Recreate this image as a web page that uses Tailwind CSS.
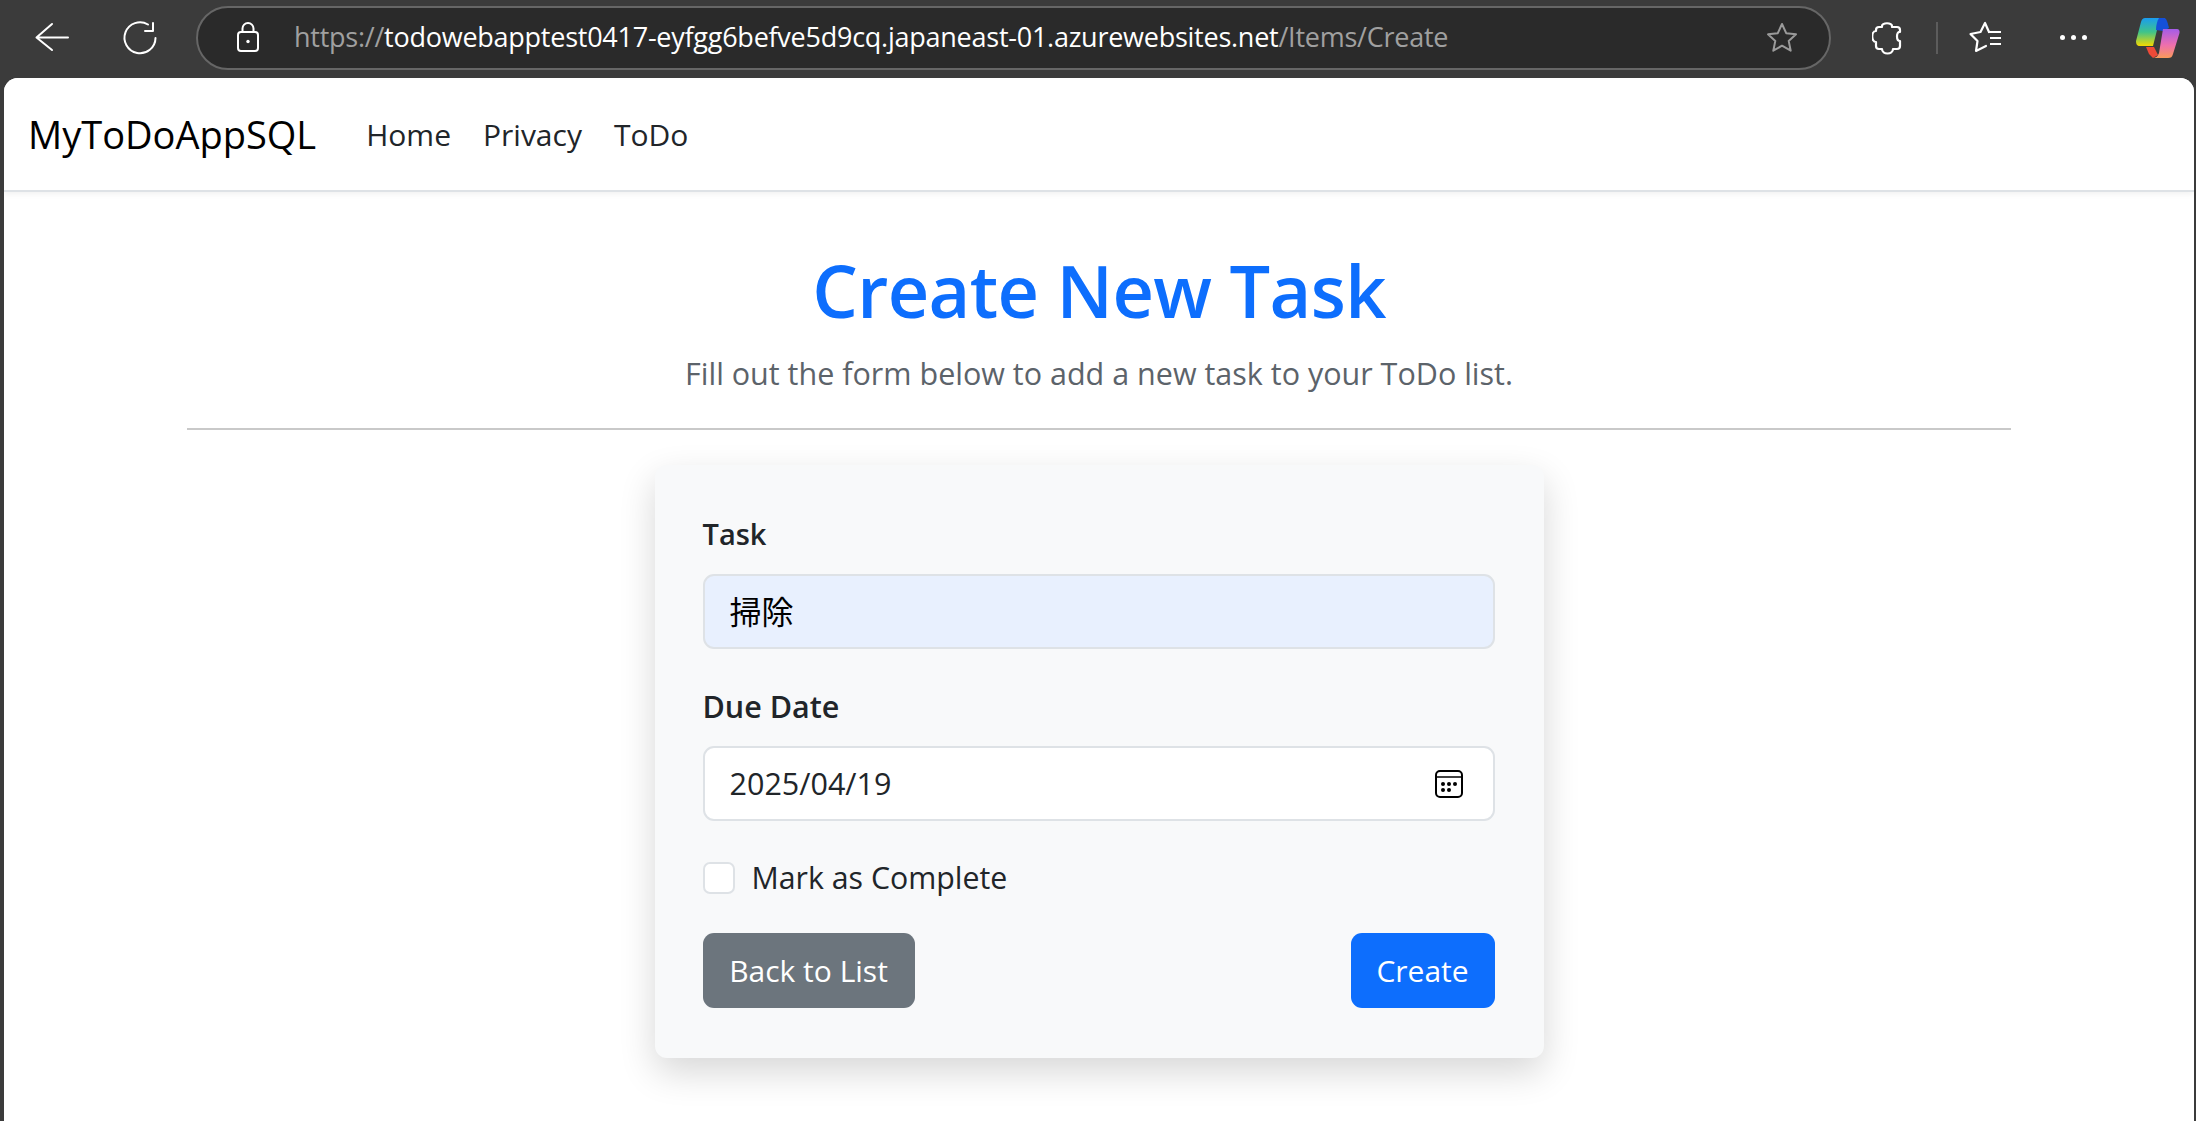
<!DOCTYPE html>
<html lang="en">
<head>
    <meta charset="UTF-8">
    <meta name="viewport" content="width=device-width, initial-scale=1.0">
    <title>Create New Task</title>
    <script src="https://cdn.jsdelivr.net/npm/@tailwindcss/browser@4"></script>
</head>
<body class="bg-[#3b3b3b] font-['Open_Sans','Noto_Sans_CJK_JP',sans-serif]">
    <div class="flex flex-col h-screen overflow-hidden">
        <!-- browser toolbar -->
        <header class="h-[78px] shrink-0 flex items-center pb-[3px] text-white">
            <div class="w-[196px] shrink-0 pl-[32px] flex items-center gap-[48px]">
                <svg class="w-[40px] h-[40px]" viewBox="0 0 40 40" fill="none" stroke="#fff" stroke-width="2" stroke-linecap="round" stroke-linejoin="round"><path d="M5 19.500h31M20 6 4.500 19.500 20 32"/></svg>
                <svg class="w-[40px] h-[40px]" viewBox="0 0 40 40" fill="none" stroke="#fff" stroke-width="2" stroke-linecap="round" stroke-linejoin="round"><path d="M28 6.500A15.500 15.500 0 1 0 35.500 20M33 5v8h-8"/></svg>
            </div>
            <div class="w-[1635px] h-[64px] shrink-0 flex items-center rounded-full border-2 border-[#666] bg-[#2a2a2a] pl-[36px] pr-[30px]">
                <svg class="w-[28px] h-[34px] shrink-0" viewBox="0 0 28 34" fill="none" stroke="#fff" stroke-width="2"><rect x="4" y="11" width="20" height="19" rx="3"/><path d="M8.500 11V7.500a5.500 5.500 0 0 1 11 0V11"/><circle cx="14" cy="20.500" r="1.700" fill="#fff" stroke="none"/></svg>
                <div class="ml-[32px] text-[27px] tracking-[-0.25px] whitespace-nowrap text-[#a0a0a0]">https://<span class="text-white">todowebapptest0417-eyfgg6befve5d9cq.japaneast-01.azurewebsites.net</span>/Items/Create</div>
                <svg class="ml-auto w-[34px] h-[34px] shrink-0" viewBox="0 0 34 34" fill="none" stroke="#9a9a9a" stroke-width="2" stroke-linejoin="round"><path d="m17 3 4.200 9.200 9.800 1.100-7.300 6.600 2 9.800-8.700-5-8.700 5 2-9.800L3 13.300l9.800-1.100z"/></svg>
            </div>
            <div class="flex items-center pl-[41px]">
                <svg class="w-[30px] h-[34px]" viewBox="0 0 30 34" fill="none" stroke="#fff" stroke-width="2.200" stroke-linejoin="round"><path d="M10 6C9 1 21 1 20 6h5a3 3 0 0 1 3 3v2c-4-1-4 9 0 9v5a3 3 0 0 1-3 3h-4c0 6-11 6-11 0H7a3 3 0 0 1-3-3v-4c-5 0-5-11 0-11V9a3 3 0 0 1 3-3z"/></svg>
                <div class="ml-[34px] w-[2px] h-[32px] bg-[#5c5c5c]"></div>
                <svg class="ml-[31px] w-[34px] h-[36px]" viewBox="0 0 34 36" fill="none" stroke="#fff" stroke-width="2.200" stroke-linejoin="round" stroke-linecap="round"><path d="M20 12 16 3l-4.500 9-10 2 7 7L7 31l10-5"/><path d="M19 12h13M21 18h11M21 24h11" stroke-linecap="butt"/></svg>
                <div class="ml-[57px] flex gap-[6px]">
                    <div class="w-[5px] h-[5px] rounded-full bg-white"></div>
                    <div class="w-[5px] h-[5px] rounded-full bg-white"></div>
                    <div class="w-[5px] h-[5px] rounded-full bg-white"></div>
                </div>
                <svg class="ml-[49px] w-[44px] h-[42px]" viewBox="0 0 44 42">
                    <defs>
                        <linearGradient id="cp1" x1="0" y1="0" x2="0" y2="1"><stop offset="0" stop-color="#1a9cf0"/><stop offset=".5" stop-color="#3fc48a"/><stop offset="1" stop-color="#f5d800"/></linearGradient>
                        <linearGradient id="cp2" x1="0" y1="0" x2="0" y2="1"><stop offset="0" stop-color="#a45ce8"/><stop offset=".55" stop-color="#ee6fae"/><stop offset="1" stop-color="#fb9a5a"/></linearGradient>
                    </defs>
                    <path d="M10 30h8l4 8-5 3-4-4z" fill="#ee4a38"/>
                    <path d="M9 1h20l-6 12-2 0-4 16H4c-3 0-4-2-4-5L5 5c1-3 2-4 4-4z" fill="url(#cp1)"/>
                    <path d="M23 1h5c2 0 3 2 5 10l-6 3-7-1c0-4 1-9 3-12z" fill="#1450d8"/>
                    <path d="M27 12h14c2 0 3 2 2.500 4L37 37c-1 3-2 4-5 4H16c4 0 6-2 7-5z" fill="url(#cp2)"/>
                </svg>
            </div>
        </header>

        <!-- page -->
        <div class="flex-1 ml-[4px] mr-[2px] bg-white rounded-t-[14px] text-[#212529] overflow-hidden">
            <nav class="h-[114px] flex items-center pl-[24px] bg-white border-b-2 border-[#dee2e6] shadow-[0_2px_6px_rgba(0,0,0,0.06)]">
                <a href="#" class="text-[38px] text-black">MyToDoAppSQL</a>
                <div class="flex ml-[50px] gap-[32px] text-[30px]">
                    <a href="#">Home</a>
                    <a href="#">Privacy</a>
                    <a href="#">ToDo</a>
                </div>
            </nav>

            <main class="w-[1824px] ml-[183px]">
                <div class="text-center pt-[56px] pb-[34px] border-b-2 border-[#c9c9c9]">
                    <h1 class="text-[72px] leading-[84px] font-semibold text-[#0d6efd] tracking-[-0.6px]">Create New Task</h1>
                    <p class="mt-[20px] text-[30.500px] leading-[42px] text-[#5c636a]">Fill out the form below to add a new task to your ToDo list.</p>
                </div>

                <form class="w-[889px] mx-auto mt-[35px] h-[593px] pl-[48px] pr-[49px] pt-[48px] bg-[#f8f9fa] rounded-[12px] shadow-[0_14px_36px_rgba(0,0,0,0.16)]">
                    <label class="block text-[29px] leading-[42px] font-semibold">Task</label>
                    <div class="mt-[19px] h-[75px] flex items-center px-[25px] text-[32px] bg-[#e8f0fe] text-black border-2 border-[#dee2e6] rounded-[11px]">掃除</div>

                    <label class="block mt-[36px] text-[30.500px] leading-[42px] font-semibold">Due Date</label>
                    <div class="mt-[19px] h-[75px] flex items-center justify-between px-[25px] text-[30.500px] bg-white border-2 border-[#dee2e6] rounded-[11px]">
                        <span>2025/04/19</span>
                        <svg class="w-[30px] h-[30px] mr-[4px]" viewBox="0 0 30 30" fill="none" stroke="#000" stroke-width="2"><rect x="2" y="2" width="26" height="26" rx="4"/><path d="M2 8h26" stroke-width="1.500"/><g fill="#000" stroke="none"><circle cx="9" cy="15" r="2"/><circle cx="15" cy="15" r="2"/><circle cx="21" cy="15" r="2"/><circle cx="9" cy="21" r="2"/><circle cx="15" cy="21" r="2"/></g></svg>
                    </div>

                    <div class="mt-[41px] flex items-center h-[32px]">
                        <div class="w-[32px] h-[32px] bg-white border-2 border-[#dee2e6] rounded-[7px]"></div>
                        <span class="ml-[17px] text-[30.300px]">Mark as Complete</span>
                    </div>

                    <div class="mt-[39px] flex justify-between">
                        <a href="#" class="w-[212px] h-[75px] flex items-center justify-center text-[30px] text-white bg-[#6c757d] rounded-[11px]">Back to List</a>
                        <button type="button" class="w-[144px] h-[75px] flex items-center justify-center text-[30px] text-white bg-[#0d6efd] rounded-[11px]">Create</button>
                    </div>
                </form>
            </main>
        </div>
    </div>
</body>
</html>
